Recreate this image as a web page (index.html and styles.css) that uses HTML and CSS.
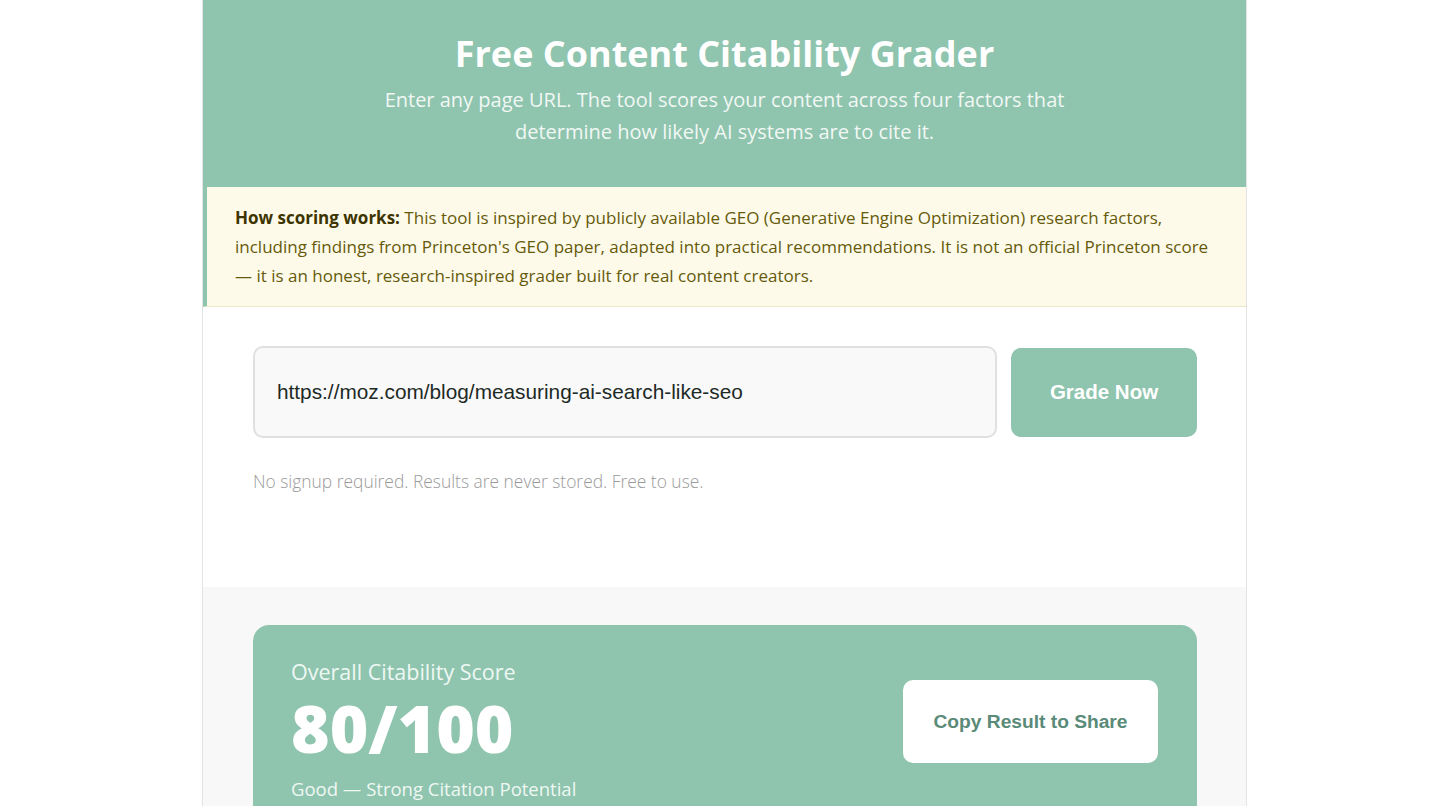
FILE: index.html
```html
<!DOCTYPE html>
<html lang="en">
<head>
<meta charset="utf-8">
<title>Free Content Citability Grader</title>
<link rel="stylesheet" href="styles.css">
</head>
<body>
<div class="page">
  <main class="tool">
    <header class="hero">
      <h1 class="hero-title">Free Content Citability Grader</h1>
      <p class="hero-sub">Enter any page URL. The tool scores your content across four factors that determine how likely AI systems are to cite it.</p>
    </header>
    <section class="notice">
      <p><strong>How scoring works:</strong> This tool is inspired by publicly available GEO (Generative Engine Optimization) research factors, including findings from Princeton's GEO paper, adapted into practical recommendations. It is not an official Princeton score — it is an honest, research-inspired grader built for real content creators.</p>
    </section>
    <section class="form-area">
      <div class="form-row">
        <input class="url-input" type="text" value="https://moz.com/blog/measuring-ai-search-like-seo">
        <button class="grade-btn" type="button">Grade Now</button>
      </div>
      <p class="form-note">No signup required. Results are never stored. Free to use.</p>
    </section>
    <section class="results">
      <div class="score-card">
        <div class="score-info">
          <div class="score-label">Overall Citability Score</div>
          <div class="score-value">80/100</div>
          <div class="score-verdict">Good — Strong Citation Potential</div>
        </div>
        <button class="copy-btn" type="button">Copy Result to Share</button>
      </div>
    </section>
  </main>
</div>
</body>
</html>
```

FILE: styles.css
```css
* { box-sizing: border-box; }
html, body { margin: 0; padding: 0; background: #ffffff; }
body { font-family: "Open Sans", "Noto Sans", sans-serif; color: #333; }

.page { padding-left: 16px; }

.tool {
  max-width: 1045px;
  margin: 0 auto;
  border: 1px solid #e4e4e4;
  border-top: none;
  border-radius: 0 0 12px 12px;
  overflow: hidden;
}

.hero {
  background: #8fc4ae;
  margin: 0 -1px;
  padding: 30px 40px 39px;
  text-align: center;
}
.hero-title {
  margin: 0;
  font-size: 36px;
  line-height: 48px;
  font-weight: 700;
  color: #ffffff;
}
.hero-sub {
  margin: 6px auto 0;
  max-width: 700px;
  font-size: 20px;
  line-height: 32px;
  font-weight: 400;
  color: #f1f8f4;
}

.notice {
  background: #fdfaea;
  border-left: 5px solid #8fc4ae;
  border-bottom: 1px solid #ebe6c3;
  margin-left: -1px;
  padding: 16px 30px 16px 28px;
}
.notice p {
  margin: 0;
  font-size: 17px;
  line-height: 29px;
  color: #665a0a;
}
.notice strong { color: #3d3400; font-weight: 700; }

.form-area {
  padding: 39px 49px 94px 50px;
  background: #ffffff;
}
.form-row {
  display: flex;
  align-items: center;
  gap: 14px;
}
.url-input {
  flex: 1;
  height: 92px;
  padding: 0 22px;
  border: 2px solid #e0e0e0;
  border-radius: 10px;
  background: #f9f9f9;
  font-family: "Liberation Sans", Arial, sans-serif;
  font-size: 20.8px;
  color: #1d2a26;
  outline: none;
}
.grade-btn {
  width: 186px;
  height: 89px;
  border: none;
  border-radius: 10px;
  background: #8fc4ae;
  color: #ffffff;
  font-family: "Liberation Sans", Arial, sans-serif;
  font-size: 20.5px;
  font-weight: 700;
}
.form-note {
  margin: 31px 0 0;
  font-size: 17.4px;
  line-height: 24px;
  font-weight: 300;
  color: #9a9a9a;
}

.results {
  background: #f8f8f8;
  padding: 38px 49px 40px 50px;
}
.score-card {
  background: #8fc4ae;
  border-radius: 16px;
  padding: 32px 39px 20px 38px;
  display: flex;
  align-items: flex-start;
  justify-content: space-between;
}
.score-label {
  font-size: 21.5px;
  line-height: 30px;
  color: #eef8f3;
}
.score-value {
  font-size: 66px;
  line-height: 80px;
  font-weight: 800;
  color: #ffffff;
}
.score-verdict {
  margin-top: 9px;
  font-size: 18.5px;
  line-height: 26px;
  color: #eef8f3;
}
.copy-btn {
  margin-top: 23px;
  width: 255px;
  height: 83px;
  border: none;
  border-radius: 10px;
  background: #ffffff;
  color: #5a8a78;
  font-family: "Liberation Sans", Arial, sans-serif;
  font-size: 19.2px;
  font-weight: 700;
}
```
